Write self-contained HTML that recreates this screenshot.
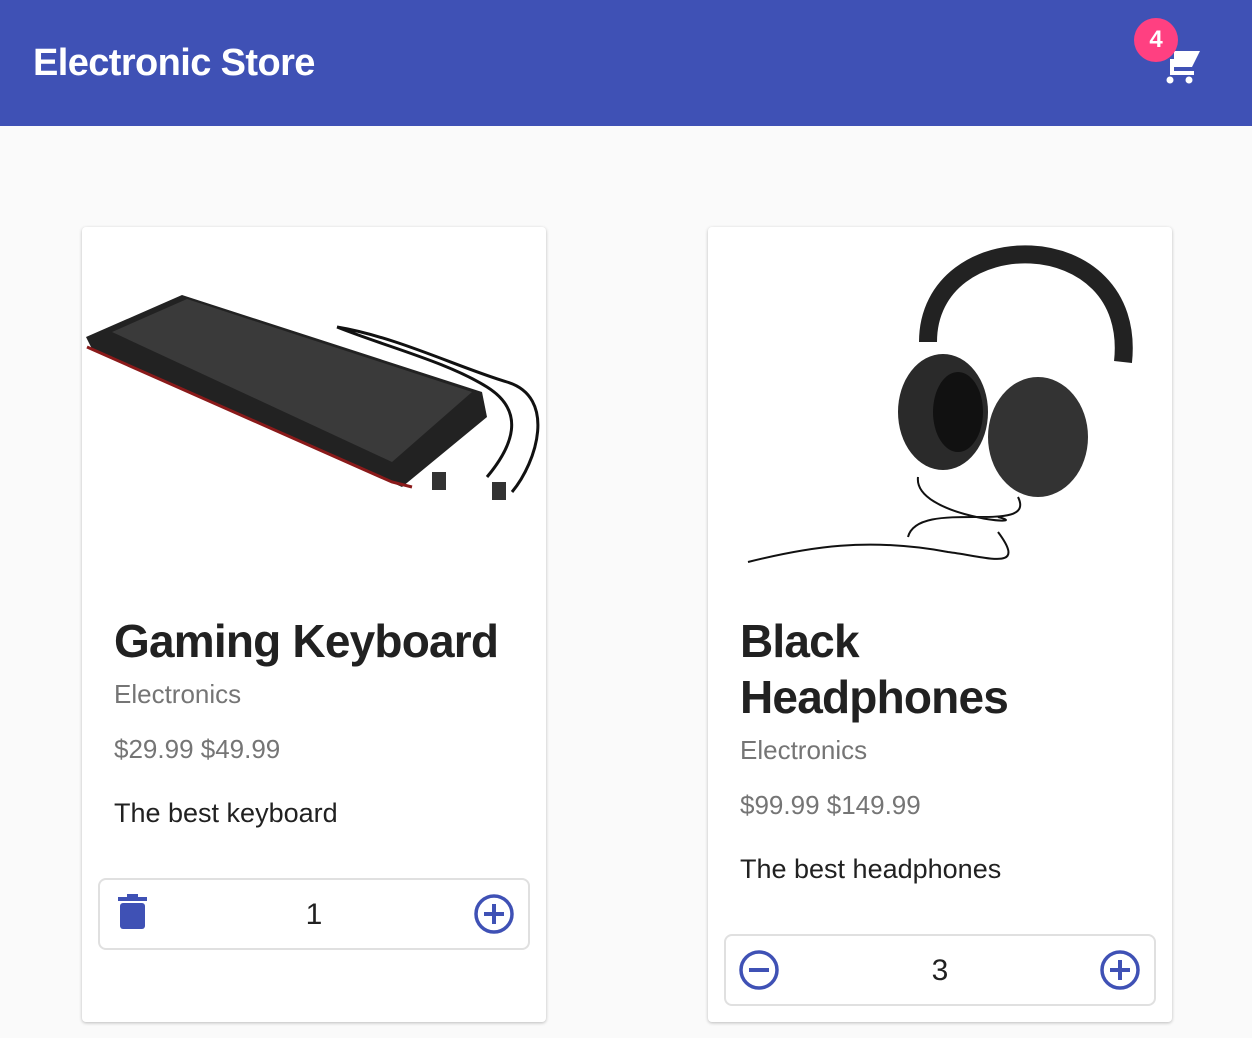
<!DOCTYPE html>
<html><head><style>
body{margin:0;width:1252px;height:1038px;background:#fafafa;font-family:"Liberation Sans",sans-serif;overflow:hidden;position:relative}
.hdr{position:absolute;left:0;top:0;width:1252px;height:126px;background:#3f51b5}
.hdr h1{position:absolute;left:33px;top:42px;margin:0;color:#fff;font-size:38px;font-weight:bold;letter-spacing:-0.6px}
.card{position:absolute;top:227px;width:464px;height:795px;background:#fff;border-radius:4px;box-shadow:0 1px 3px rgba(0,0,0,.25)}
.t{position:absolute;left:32px;font-size:46px;font-weight:bold;color:#212121;line-height:56px;letter-spacing:-0.8px}
.c{position:absolute;left:32px;font-size:26px;color:#757575}
.d{position:absolute;left:32px;font-size:27px;color:#212121}
.box{position:absolute;left:16px;width:428px;height:68px;border:2px solid #e0e0e0;border-radius:8px}
.box .n{position:absolute;left:0;right:0;top:18px;text-align:center;font-size:30px;color:#212121}
.box svg{position:absolute;top:13px}
</style></head><body>
<div class="hdr"><h1>Electronic Store</h1>
<svg style="position:absolute;left:1162px;top:45px" width="40" height="40" viewBox="0 0 40 40"><path d="M12 6h26l-8 16H12z" fill="#fff"/><path d="M10 14v14h22" stroke="#fff" stroke-width="4" fill="none"/><circle cx="8" cy="35" r="3.5" fill="#fff"/><circle cx="27" cy="35" r="3.5" fill="#fff"/></svg>
<div style="position:absolute;left:1134px;top:18px;width:44px;height:44px;border-radius:50%;background:#ff4081;color:#fff;font-weight:bold;font-size:24px;text-align:center;line-height:44px">4</div>
</div>

<div class="card" style="left:82px">
<svg style="position:absolute;left:0;top:60px" width="464" height="230" viewBox="0 0 464 230"><path d="M4 50L100 8 400 105 405 130 320 200 10 62z" fill="#222"/><path d="M30 45L105 12 390 105 310 175z" fill="#3a3a3a"/><path d="M5 60 310 195 330 200" stroke="#8a1a1a" stroke-width="3" fill="none"/><path d="M255 40c60 10 120 40 170 55s30 80 5 110M255 40c50 20 110 35 150 60s25 60 0 90" stroke="#111" stroke-width="3" fill="none"/><rect x="350" y="185" width="14" height="18" fill="#333"/><rect x="410" y="195" width="14" height="18" fill="#333"/></svg>
<div class="t" style="top:386px">Gaming Keyboard</div>
<div class="c" style="top:452px">Electronics</div>
<div class="c" style="top:507px">$29.99 $49.99</div>
<div class="d" style="top:571px">The best keyboard</div>
<div class="box" style="top:651px"><svg style="left:18px" width="32" height="40" viewBox="0 0 32 40"><rect x="0" y="4" width="29" height="4" fill="#3f51b5"/><rect x="9" y="1" width="11" height="4" fill="#3f51b5"/><rect x="2" y="10" width="25" height="26" rx="3" fill="#3f51b5"/></svg><div class="n">1</div><svg style="left:373px" width="42" height="42" viewBox="0 0 42 42"><circle cx="21" cy="21" r="18" stroke="#3f51b5" stroke-width="3.5" fill="none"/><path d="M21 11v20M11 21h20" stroke="#3f51b5" stroke-width="4"/></svg></div>
</div>

<div class="card" style="left:708px">
<svg style="position:absolute;left:30px;top:5px" width="400" height="340" viewBox="0 0 400 340"><path d="M190 110c0-120 210-120 195 20" stroke="#222" stroke-width="18" fill="none"/><ellipse cx="205" cy="180" rx="45" ry="58" fill="#2a2a2a"/><ellipse cx="300" cy="205" rx="50" ry="60" fill="#333"/><ellipse cx="220" cy="180" rx="25" ry="40" fill="#111"/><path d="M180 245c-5 40 120 50 80 40M280 265c20 40-100 0-110 40M10 330c60-15 120-25 200-10 40 5 80 20 50-20" stroke="#111" stroke-width="2" fill="none"/></svg>
<div class="t" style="top:386px">Black<br>Headphones</div>
<div class="c" style="top:508px">Electronics</div>
<div class="c" style="top:563px">$99.99 $149.99</div>
<div class="d" style="top:627px">The best headphones</div>
<div class="box" style="top:707px"><svg style="left:12px" width="42" height="42" viewBox="0 0 42 42"><circle cx="21" cy="21" r="18" stroke="#3f51b5" stroke-width="3.5" fill="none"/><path d="M11 21h20" stroke="#3f51b5" stroke-width="4"/></svg><div class="n">3</div><svg style="left:373px" width="42" height="42" viewBox="0 0 42 42"><circle cx="21" cy="21" r="18" stroke="#3f51b5" stroke-width="3.5" fill="none"/><path d="M21 11v20M11 21h20" stroke="#3f51b5" stroke-width="4"/></svg></div>
</div>
</body></html>
